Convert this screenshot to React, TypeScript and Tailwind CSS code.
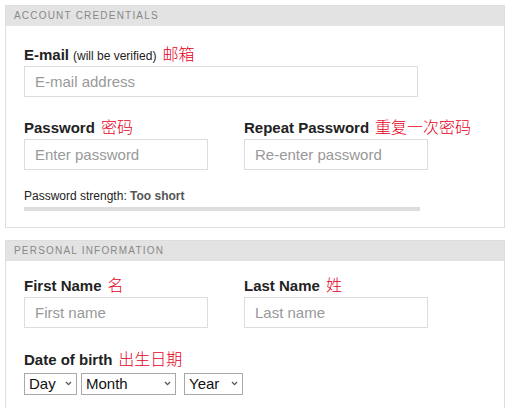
import React from "react";

const Chevron = () => (
  <svg
    className="absolute right-[5px] top-[9px] pointer-events-none"
    width="7"
    height="5"
    viewBox="0 0 7 5"
  >
    <path d="M1 1 L3.5 3.6 L6 1" fill="none" stroke="#555" strokeWidth="1.3" />
  </svg>
);

const Label = ({ text, zh, note }: { text: string; zh: string; note?: string }) => (
  <div className="h-[18px] leading-[18px] whitespace-nowrap flex items-baseline">
    <span className="text-[15px] font-bold text-[#222]">{text}</span>
    {note && <span className="text-[12px] text-[#222] ml-[4px]">{note}</span>}
    <span className="text-[16px] text-[#e5001c] ml-[6px] font-['Noto_Sans_CJK_SC',sans-serif] font-light leading-[18px]">
      {zh}
    </span>
  </div>
);

const Input = ({ placeholder, w }: { placeholder: string; w: string }) => (
  <input
    placeholder={placeholder}
    className={`${w} h-[31px] mt-[4px] block border border-[#dddddd] bg-white pl-[10px] text-[15px] text-[#222] placeholder:text-[#999] outline-none`}
  />
);

const Select = ({ label, w }: { label: string; w: string }) => (
  <div className={`relative ${w} h-[22px]`}>
    <select className="appearance-none w-full h-full border border-[#a9a9a9] bg-white pl-[4px] text-[15px] leading-[20px] text-[#111] outline-none rounded-none">
      <option>{label}</option>
    </select>
    <Chevron />
  </div>
);

export default function App() {
  return (
    <div className="w-[510px] h-[408px] overflow-hidden bg-white pt-[5px] pl-[5px] font-['Liberation_Sans','Noto_Sans_CJK_SC',sans-serif]">
      <section className="w-[500px] border border-[#dedede]">
        <div className="h-[20px] leading-[20px] bg-[#e3e3e3] pl-[8px] text-[10px] tracking-[1.2px] text-[#888]">
          ACCOUNT CREDENTIALS
        </div>
        <div className="pl-[18px] pt-[18px] pb-[16px]">
          <Label text="E-mail" note="(will be verified)" zh="邮箱" />
          <Input placeholder="E-mail address" w="w-[394px]" />
          <div className="grid grid-cols-[220px_220px] mt-[20px]">
            <div>
              <Label text="Password" zh="密码" />
              <Input placeholder="Enter password" w="w-[184px]" />
            </div>
            <div>
              <Label text="Repeat Password" zh="重复一次密码" />
              <Input placeholder="Re-enter password" w="w-[184px]" />
            </div>
          </div>
          <div className="mt-[19px] h-[14px] leading-[14px] text-[12px] text-[#222]">
            Password strength: <span className="font-bold text-[#555]">Too short</span>
          </div>
          <div className="mt-[4px] h-[4px] w-[396px] bg-[#dddddd]" />
        </div>
      </section>

      <section className="w-[500px] mt-[12px] border border-[#dedede] h-[200px]">
        <div className="h-[20px] leading-[20px] bg-[#e3e3e3] pl-[8px] text-[10px] tracking-[1.2px] text-[#888]">
          PERSONAL INFORMATION
        </div>
        <div className="pl-[18px] pt-[14px]">
          <div className="grid grid-cols-[220px_220px]">
            <div>
              <Label text="First Name" zh="名" />
              <Input placeholder="First name" w="w-[184px]" />
            </div>
            <div>
              <Label text="Last Name" zh="姓" />
              <Input placeholder="Last name" w="w-[184px]" />
            </div>
          </div>
          <div className="mt-[21px]">
            <Label text="Date of birth" zh="出生日期" />
            <div className="flex mt-[5px]">
              <Select label="Day" w="w-[53px]" />
              <div className="ml-[4px]">
                <Select label="Month" w="w-[95px]" />
              </div>
              <div className="ml-[8px]">
                <Select label="Year" w="w-[59px]" />
              </div>
            </div>
          </div>
        </div>
      </section>
    </div>
  );
}
